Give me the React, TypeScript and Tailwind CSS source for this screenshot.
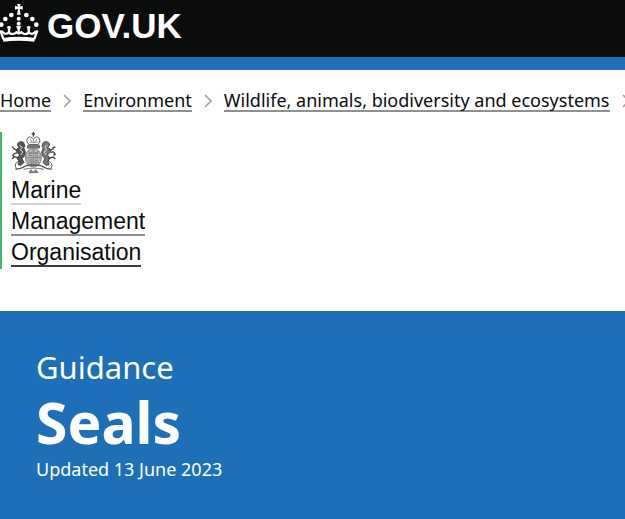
import type { ReactNode } from "react";

const BREADCRUMBS = ["Home", "Environment", "Wildlife, animals, biodiversity and ecosystems"];

const ORGANISATION_LINES = [
  { text: "Marine", className: "border-b-2 border-[#d3d3d3]" },
  { text: "Management", className: "border-b-2 border-[#8c8c8c]" },
  { text: "Organisation", className: "border-b-2 border-[#3d3d3d]" },
];

function Crown() {
  return (
    <svg viewBox="0 0 117 114" className="h-[38px] w-[39px] shrink-0" fill="#fff" aria-hidden="true">
      <path d="M51 0h11l-3 8 9-3v12l-9-3 3 18H51l3-18-9 3V5l9 3z" />
      <circle cx="56" cy="44" r="6" />
      <circle cx="56" cy="59" r="6" />
      <circle cx="34" cy="33" r="7" />
      <circle cx="79" cy="33" r="7" />
      <circle cx="16" cy="45" r="7" />
      <circle cx="97" cy="45" r="7" />
      <circle cx="4" cy="62" r="7" />
      <circle cx="109" cy="62" r="7" />
      <path d="M8 102c31-5 65-5 97 0l-2 11c-31-4-62-4-93 0z" />
      <g fill="none" stroke="#fff" strokeWidth="7">
        <path d="M1 79l9 26M112 79l-9 26" />
        <path d="M6 81c5 9 12 11 20 5 6 6 17 6 23-1 5 4 10 4 15 0 6 7 17 7 23 1 8 6 15 4 20-5" />
        <path d="M27 66v22M56 66v24M86 66v22" />
      </g>
      <path d="M20 68h14l-4 7h-6zM79 68h14l-4 7h-6zM48 67h16l-4 8h-8z" />
    </svg>
  );
}

function Crest() {
  return (
    <svg viewBox="0 0 138 126" className="h-[42px] w-[46px]" fill="none" stroke="#444" strokeWidth="3" aria-hidden="true">
      <path d="M67 0v14M62 6h10" strokeWidth="4" />
      <path d="M49 20c-4 7 0 14 6 18h24c6-4 10-11 6-18-5-8-12-5-18 1-6-6-13-9-18-1z" stroke="#555" />
      <path d="M55 31h25M67 18v15M58 22l4 8M77 22l-4 8" stroke="#999" />
      <path d="M50 40c8-4 27-4 35 0l1 8H49z" fill="#777" stroke="#666" />
      <ellipse cx="67" cy="77" rx="24" ry="28" fill="#b5b5b5" stroke="#888" />
      <path d="M67 50v54M44 77h46M51 59c10 5 23 5 33 0M51 93c10-6 23-6 33 0" stroke="#888" />
      <path d="M54 64h8m10 0h9M53 70h9m11 2h8M53 84h9m11 1h8M60 98l3-7m10 0 3 7" stroke="#777" />
      <path d="M20 35c3-7 12-8 18-3l4 10-4 6 5 11-2 12-8 9 6 11-9 9-9-2 3-10-6-10 8-9-9-9 1-9 8-5-6-5z" fill="#555" />
      <path d="M115 35c-3-7-12-8-18-3l-4 10 4 6-5 11 2 12 8 9-6 11 9 9 9-2-3-10 6-10-8-9 9-9-1-9-8-5 6-5z" fill="#777" />
      <path d="M25 40l9 6-7 7 9 7-7 9M110 40l-9 6 7 7-9 7 7 9" stroke="#ddd" />
      <path d="M20 56 8 50M19 62 6 67M23 78 10 74l-7 6M8 50l-4-6M10 74l-6-6" strokeWidth="4" />
      <path d="M116 56l12-7M118 62c10-6 16 2 10 8M112 80l14-5 7 6M128 70l6-4M124 48l9-3" strokeWidth="4" />
      <path d="M23 88c-10 3-13 13-6 22M113 88c10 3 13 13 6 22" />
      <path d="M13 111c13 2 22-4 31-9 9-4 38-4 47 0 9 5 18 11 31 9" stroke="#555" strokeWidth="4" />
      <path d="M38 113c12-6 46-6 60 0" stroke="#888" strokeWidth="4" />
      <path d="M54 122l6-9 7 8 7-8 7 9z" fill="#777" stroke="#777" />
    </svg>
  );
}

function Chevron() {
  return (
    <svg viewBox="0 0 8 14" className="h-[14px] w-2 shrink-0" fill="none" stroke="#a0a4a6" strokeWidth="1.6" aria-hidden="true">
      <path d="M1 1l6 6-6 6" />
    </svg>
  );
}

function BreadcrumbLink({ children }: { children: ReactNode }) {
  return (
    <a href="#" className="border-b-2 border-[#8f9191] leading-5 whitespace-nowrap">
      {children}
    </a>
  );
}

export default function App() {
  return (
    <div className="min-h-screen overflow-hidden bg-white font-['Noto_Sans',sans-serif] text-[#0b0c0c]">
      <header className="border-b-[13px] border-[#1d70b8] bg-[#0b0c0c]">
        <a href="#" className="flex h-[57px] items-start gap-2 pt-1 text-white">
          <Crown />
          <span className="font-['Liberation_Sans',sans-serif] text-[35px] leading-11 font-bold">GOV.UK</span>
        </a>
      </header>

      <nav aria-label="Breadcrumb" className="pt-5">
        <ol className="flex items-center gap-3 text-lg">
          {BREADCRUMBS.map((label) => (
            <li key={label} className="flex shrink-0 items-center gap-3">
              <BreadcrumbLink>{label}</BreadcrumbLink>
              <Chevron />
            </li>
          ))}
        </ol>
      </nav>

      <section className="mt-5 border-l-2 border-[#42b873] pb-0.5 pl-[9px] font-['Liberation_Sans',sans-serif] text-[23px]">
        <Crest />
        <a href="#" className="mt-1 flex flex-col items-start gap-1">
          {ORGANISATION_LINES.map((line) => (
            <span key={line.text} className={`leading-[25px] ${line.className}`}>
              {line.text}
            </span>
          ))}
        </a>
      </section>

      <main className="mt-[42px] min-h-[208px] bg-[#1d70b8] px-9 pt-9 pb-9 text-white">
        <p className="text-[31px] leading-10">Guidance</p>
        <h1 className="text-[57px] leading-[70px] font-bold">Seals</h1>
        <p className="text-lg leading-6">Updated 13 June 2023</p>
      </main>
    </div>
  );
}
